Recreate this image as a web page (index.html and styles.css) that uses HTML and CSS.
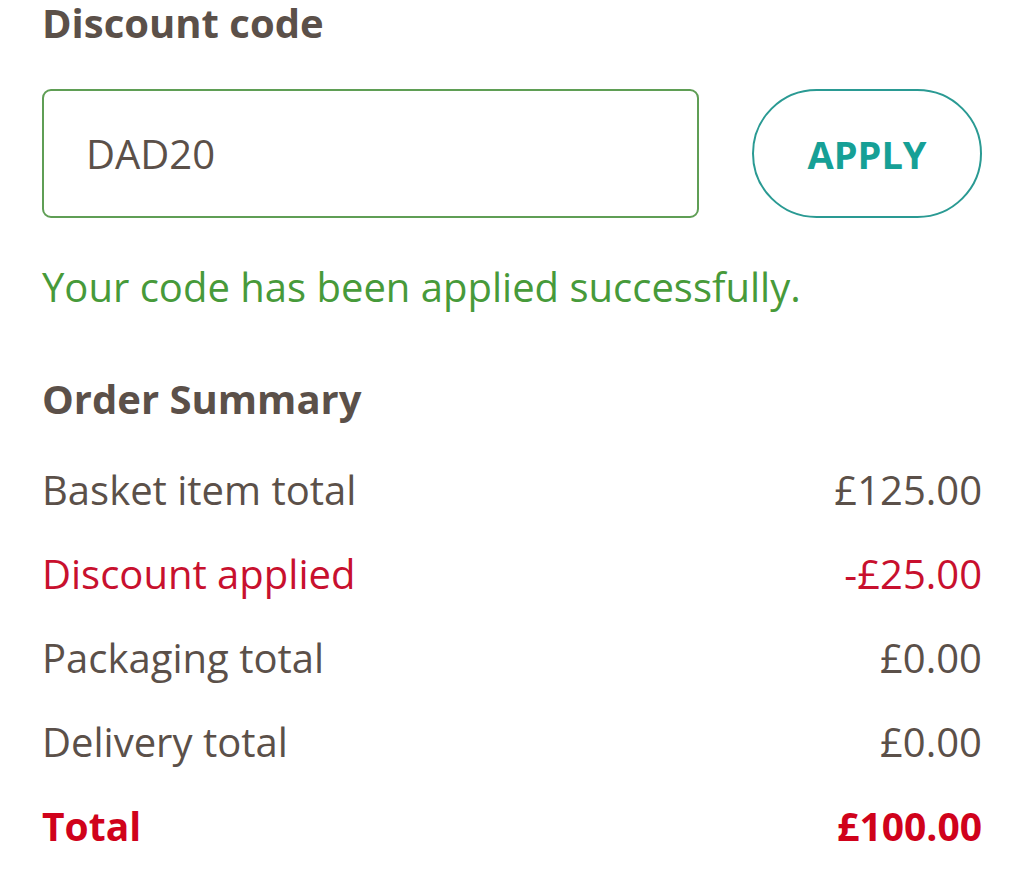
FILE: index.html
```html
<!DOCTYPE html>
<html lang="en">
<head>
    <meta charset="UTF-8">
    <title>Basket</title>
    <link rel="stylesheet" href="styles.css">
</head>
<body>
    <section class="checkout">
        <h2 class="title">Discount code</h2>
        <div class="codeForm">
            <input class="codeInput" type="text" value="DAD20">
            <button class="applyBtn" type="button">APPLY</button>
        </div>
        <p class="codeMsg">Your code has been applied successfully.</p>

        <h2 class="title summaryTitle">Order Summary</h2>
        <ul class="summary">
            <li><span>Basket item total</span><span>£125.00</span></li>
            <li class="discount"><span>Discount applied</span><span>-£25.00</span></li>
            <li><span>Packaging total</span><span>£0.00</span></li>
            <li><span>Delivery total</span><span>£0.00</span></li>
            <li class="total"><span>Total</span><span>£100.00</span></li>
        </ul>
    </section>
</body>
</html>
```

FILE: styles.css
```css
/*reset*/
html,body,h2,p,ul,li{margin: 0;padding: 0;}
li{list-style: none;}
body{background: #fff;font-family: "Open Sans", "Noto Sans", sans-serif;color: #5b5049;}

.checkout{
    padding: 0 42px;
}

.title{
    font-size: 40px;
    font-weight: 700;
    line-height: 46px;
}

.codeForm{
    display: flex;
    gap: 53px;
    margin-top: 43px;
}
.codeInput{
    flex: 1;
    height: 129px;
    box-sizing: border-box;
    border: 2px solid #5f9e55;
    border-radius: 9px;
    padding: 0 42px;
    font: 40px "Open Sans", sans-serif;
    color: #5b5049;
    outline: none;
}
.applyBtn{
    width: 230px;
    height: 129px;
    box-sizing: border-box;
    border: 2px solid #2a9a93;
    border-radius: 65px;
    background: #fff;
    color: #16a096;
    font: 700 38px "Open Sans", sans-serif;
}

.codeMsg{
    color: #479a3a;
    font-size: 40px;
    line-height: 46px;
    margin-top: 46px;
}

.summaryTitle{
    margin-top: 66px;
}

.summary{
    margin-top: 26px;
}
.summary li{
    display: flex;
    justify-content: space-between;
    font-size: 40px;
    line-height: 84px;
}
.summary .discount{
    color: #c8102e;
}
.summary .total{
    color: #d0021b;
    font-weight: 700;
    font-size: 39px;
}
```
